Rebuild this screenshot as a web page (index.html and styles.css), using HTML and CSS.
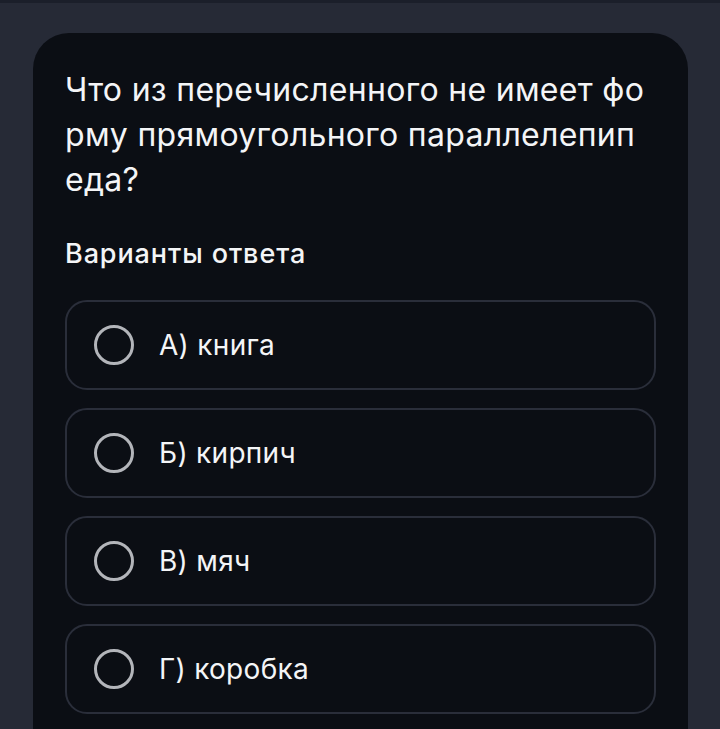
FILE: index.html
```html
<!DOCTYPE html>
<html lang="ru">
<head>
    <meta charset="UTF-8">
    <meta name="viewport" content="width=device-width, initial-scale=1.0">
    <title>Вопрос</title>
    <link rel="stylesheet" href="styles.css">
</head>
<body>
    <div class="quiz-card">
        <p class="question">Что из перечисленного не имеет форму прямоугольного параллелепипеда?</p>
        <h2 class="answers-title">Варианты ответа</h2>

        <div class="options">
            <label class="option">
                <span class="radio"></span>
                <span class="option-text">А) книга</span>
            </label>
            <label class="option">
                <span class="radio"></span>
                <span class="option-text">Б) кирпич</span>
            </label>
            <label class="option">
                <span class="radio"></span>
                <span class="option-text">В) мяч</span>
            </label>
            <label class="option">
                <span class="radio"></span>
                <span class="option-text">Г) коробка</span>
            </label>
        </div>
    </div>
</body>
</html>
```

FILE: styles.css
```css
:root {
    --page-bg: #262a36;
    --card-bg: #0b0e14;
    --border-color: #2a2e3a;
    --text-color: #f4f5f7;
    --radio-color: #b3b5ba;
}

* {
    margin: 0;
    padding: 0;
    box-sizing: border-box;
}

body {
    font-family: Inter, 'Noto Sans', sans-serif;
    background-color: var(--page-bg);
    border-top: 3px solid #1b1f2a;
    color: var(--text-color);
    height: 729px;
    overflow: hidden;
    padding: 30px 32px 0 33px;
}

.quiz-card {
    background: var(--card-bg);
    border-radius: 36px;
    padding: 34px 32px 40px 32px;
    min-height: 800px;
}

.question {
    font-size: 32px;
    line-height: 45px;
    letter-spacing: 0.3px;
    word-break: break-all;
    margin-right: 8px;
}

.answers-title {
    font-size: 27px;
    font-weight: 500;
    line-height: 36px;
    letter-spacing: 0.9px;
    margin-top: 34px;
}

.options {
    display: flex;
    flex-direction: column;
    gap: 18px;
    margin-top: 28px;
}

.option {
    display: flex;
    align-items: center;
    gap: 25px;
    height: 90px;
    padding-left: 27px;
    border: 2px solid var(--border-color);
    border-radius: 22px;
    cursor: pointer;
}

.radio {
    width: 40px;
    height: 40px;
    border: 3px solid var(--radio-color);
    border-radius: 50%;
    flex-shrink: 0;
}

.option-text {
    font-size: 28px;
    letter-spacing: 0.3px;
}
```
